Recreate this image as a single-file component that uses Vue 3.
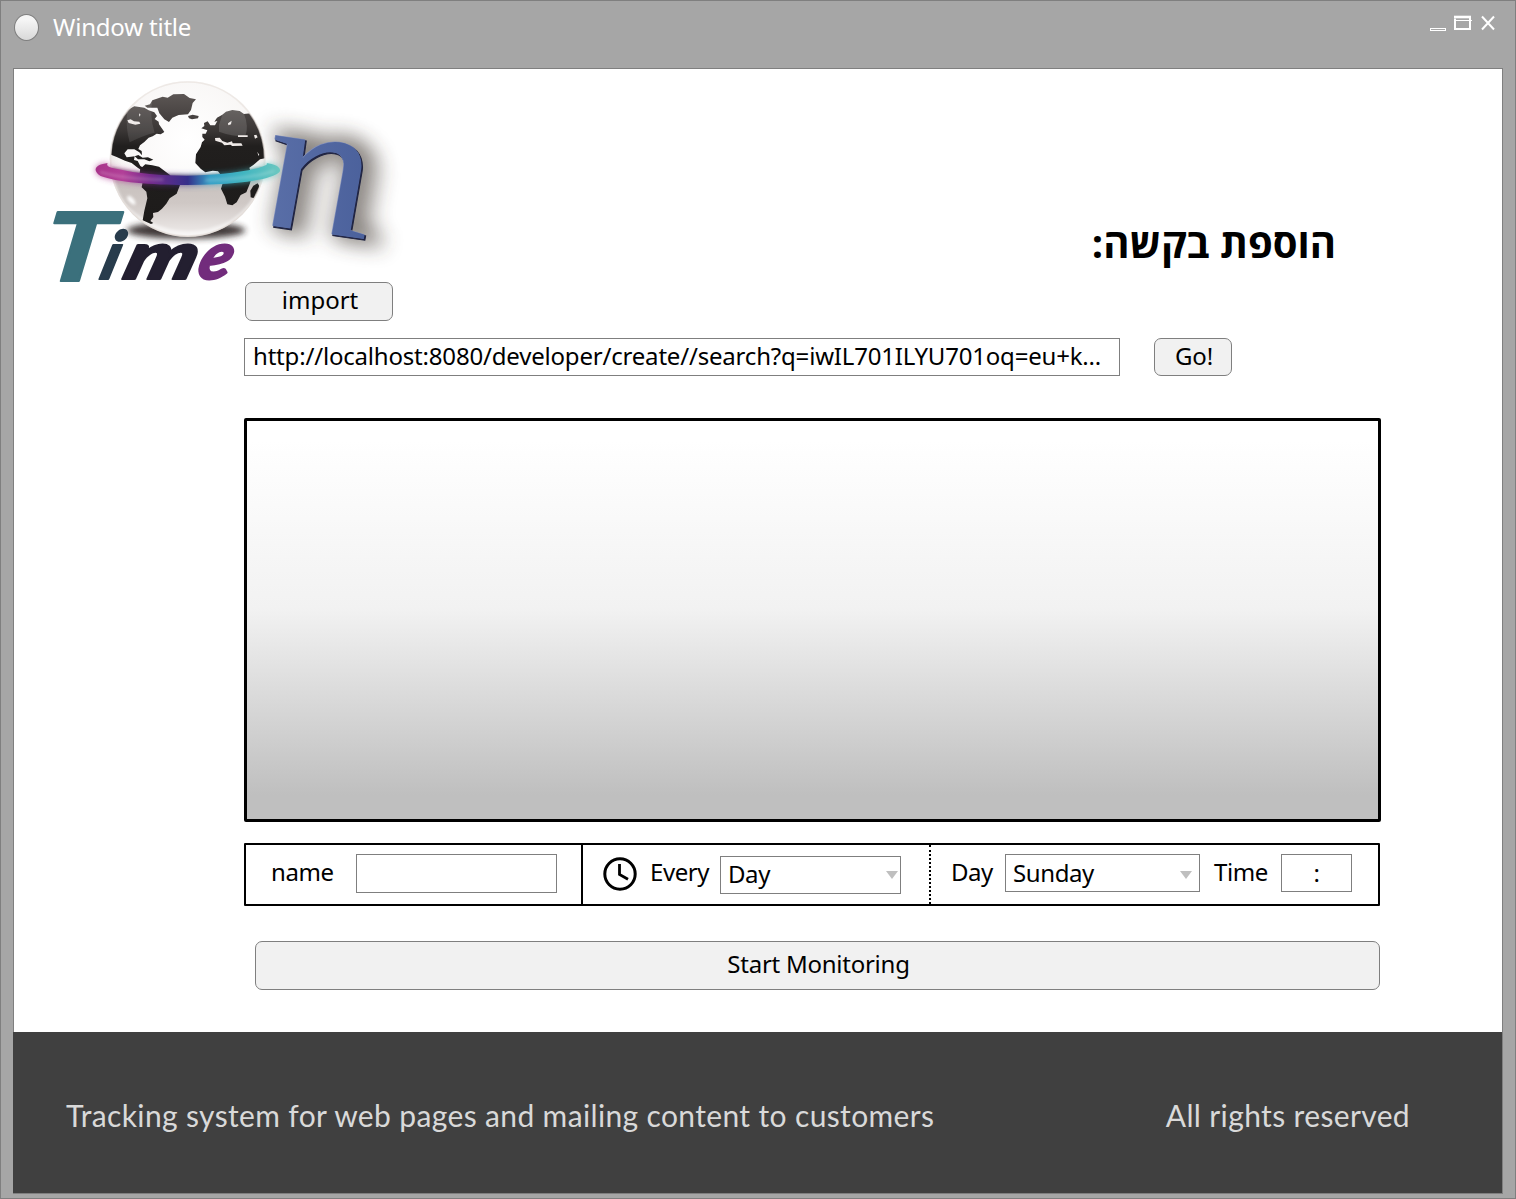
<script setup>
import { ref } from 'vue'

const url = ref('http://localhost:8080/developer/create//search?q=iwIL701ILYU701oq=eu+k...')
</script>

<template>
  <div class="window">
    <header class="titlebar">
      <span class="orb"></span>
      <span class="title">Window title</span>
      <svg class="controls" width="68" height="20" viewBox="0 0 68 20" fill="none" stroke="#fff">
        <rect x="1.5" y="14.5" width="15" height="2" />
        <path d="M26 4.5V15H41V4" stroke-width="2" />
        <path d="M25 3H42" stroke-width="2.6" />
        <path d="M26 6.5H43" />
        <path d="M53 2.5L65 15.5M65 2.5L53 15.5" stroke-width="2" />
      </svg>
    </header>

    <div class="content">
      <main class="page">
        <div class="top">
          <svg class="logo" width="400" height="225" viewBox="14 69 400 225">
            <defs>
              <radialGradient id="ball" cx=".5" cy=".38" r=".64">
                <stop offset="0" stop-color="#fff" />
                <stop offset=".7" stop-color="#f8f6f5" />
                <stop offset="1" stop-color="#d8d0cc" />
              </radialGradient>
              <linearGradient id="lower" x1="0" y1="0" x2="0" y2="1">
                <stop offset="0" stop-color="#c5bebb" />
                <stop offset=".45" stop-color="#cfc8c5" />
                <stop offset="1" stop-color="#f5f2f1" />
              </linearGradient>
              <linearGradient id="land" x1="0" y1="50" x2="0" y2="440" gradientUnits="userSpaceOnUse">
                <stop offset="0" stop-color="#5e5856" />
                <stop offset=".3" stop-color="#3a3635" />
                <stop offset=".42" stop-color="#211f1e" />
                <stop offset="1" stop-color="#1d1b1a" />
              </linearGradient>
              <linearGradient id="ring" x1="15" y1="0" x2="572" y2="0" gradientUnits="userSpaceOnUse">
                <stop offset="0" stop-color="#a8328a" />
                <stop offset=".15" stop-color="#b23f98" />
                <stop offset=".3" stop-color="#742b8c" />
                <stop offset=".5" stop-color="#352f8a" />
                <stop offset=".62" stop-color="#359fc6" />
                <stop offset=".8" stop-color="#41b5c0" />
                <stop offset="1" stop-color="#6cc8c0" />
              </linearGradient>
              <linearGradient id="letter" x1="0" y1="0" x2="1" y2="0">
                <stop offset="0" stop-color="#5a6fa8" />
                <stop offset="1" stop-color="#4a609b" />
              </linearGradient>
              <filter id="soft" x="-50%" y="-50%" width="200%" height="200%"><feGaussianBlur stdDeviation="10" /></filter>
              <filter id="glow" x="-30%" y="-100%" width="160%" height="300%"><feGaussianBlur stdDeviation="9" /></filter>
              <filter id="thin" x="-30%" y="-30%" width="160%" height="160%"><feGaussianBlur stdDeviation="4" /></filter>
              <clipPath id="globe"><circle cx="293" cy="252" r="231" /></clipPath>
            </defs>

            <text class="n halo" transform="translate(273 226) rotate(8) skewX(9) scale(1.12 1)" filter="url(#soft)">n</text>

            <g transform="translate(90 75) scale(.33333)">
              <ellipse cx="288" cy="466" rx="178" ry="25" fill="#2b2422" opacity=".9" filter="url(#glow)" />
              <circle cx="293" cy="252" r="234" fill="url(#ball)" />
              <g clip-path="url(#globe)">
                <path d="M40 290Q293 350 550 290V500H40Z" fill="url(#lower)" />
                <path d="M62 300Q80 405 170 445Q293 510 425 445Q510 390 525 290" fill="none" stroke="#fff" stroke-width="18" opacity=".55" filter="url(#thin)" />
                <g fill="url(#land)">
                  <path d="M164 92L180 88L187 76L218 65L233 68L250 58L282 57L299 69L318 73L308 84L303 105L294 118L266 120L247 128L237 141L223 133L208 115L202 98L172 98Z" />
                  <path d="M294 123L308 119L326 123L324 130L306 133L297 130Z" />
                  <path d="M133 94L163 98L176 106L193 112L201 123L194 132L206 140L207 148L217 162L223 171L212 178L200 176L188 184L176 188L163 201L150 211L145 222L155 228L156 241L148 232L133 223L113 223L103 235L110 247L123 245L134 244L132 255L143 258L151 273L165 281L158 288L143 278L125 264L105 257L80 246L63 239L67 190L87 140L112 105Z" />
                  <path d="M134 244L145 240L158 248L174 247L190 254L178 259L163 253L144 253Z" />
                  <path d="M151 281L166 268L187 271L207 275L225 289L240 300L247 314L270 330L260 356L239 370L229 386L216 401L204 411L189 414L190 426L181 438L190 444L183 447L158 436L163 407L172 370L169 350L155 337L158 321L147 307Z" />
                  <path d="M334 160L343 153L342 144L353 139L361 151L375 151L382 138L373 140L381 128L397 119L408 110L427 105L449 108L462 117L482 115L499 140L516 177L524 210L525 250L510 253L490 270L478 278L486 301L480 325L469 352L452 360L440 382L427 391L412 388L405 365L393 341L399 322L396 304L384 289L368 287L346 292L332 281L316 264L318 238L332 216L336 202L344 194L337 186L337 176L347 176L352 166Z" />
                  <path d="M503 325L508 333L503 354L492 370L482 367L481 347L490 332Z" />
                </g>
                <g fill="#efeae8">
                  <path d="M112 136L122 133L132 139L148 140L151 146L136 149L116 144Z" />
                  <path d="M375 189L389 188L397 198L412 203L426 199L428 205L454 205L458 212L427 213L421 209L403 211L396 203L376 197Z" />
                  <path d="M444 181L473 181V186H444ZM492 181L499 179L503 187L495 191ZM414 145L425 137L423 148L415 151ZM147 115L152 119L148 125ZM502 230L508 240L505 242Z" />
                </g>
                <path d="M111 108Q107 162 119 202Q160 181 194 173Q178 124 187 76Q140 70 111 108Z" fill="#fff" opacity=".1" />
                <path d="M387 149L397 119Q433 88 462 116Q477 154 466 184Q424 184 387 170Z" fill="#fff" opacity=".14" />
                <path d="M65 285Q293 330 523 283" fill="none" stroke="#282320" stroke-width="15" opacity=".45" filter="url(#thin)" />
                <ellipse cx="124" cy="376" rx="7" ry="17" fill="#fff" transform="rotate(-43 124 376)" filter="url(#thin)" />
              </g>
              <circle cx="293" cy="252" r="231" fill="none" stroke="#e6dfdb" stroke-width="5" opacity=".6" />
              <g>
                <path d="M17 286C15 274 31 267 53 264C48 272 55 277 82 282C200 309 390 309 505 279C530 272 535 267 529 264C555 267 575 277 569 290C548 311 470 324 377 328C243 334 91 326 32 303Q19 296 17 286Z" fill="url(#ring)" opacity=".75" filter="url(#glow)" />
                <path d="M17 286C15 274 31 267 53 264C48 272 55 277 82 282C200 309 390 309 505 279C530 272 535 267 529 264C555 267 575 277 569 290C548 311 470 324 377 328C243 334 91 326 32 303Q19 296 17 286Z" fill="url(#ring)" />
                <path d="M30 291Q105 313 220 314M345 316Q480 313 553 287" fill="none" stroke="#fff" stroke-width="8" opacity=".2" filter="url(#thin)" />
              </g>
            </g>

            <g transform="translate(265 225) rotate(8) skewX(9) scale(1.12 1)">
              <text class="n" x="1" y="1" fill="#202442" stroke="#202442" stroke-width="1">n</text>
              <text class="n" x="-.5" y="-.5" fill="#8391be">n</text>
              <text class="n" fill="url(#letter)">n</text>
            </g>
            <g class="time">
              <text font-size="95" fill="#3b707c" stroke="#3b707c" transform="translate(40 281) skewX(-8)" textLength="69" lengthAdjust="spacingAndGlyphs">T</text>
              <text font-size="66" transform="translate(98 279) skewX(-16)"><tspan fill="#283c4c" stroke="#283c4c">i</tspan><tspan x="23" fill="#231f30" stroke="#231f30" textLength="72" lengthAdjust="spacingAndGlyphs">m</tspan><tspan x="97" fill="#722c7c" stroke="#722c7c">e</tspan></text>
            </g>
          </svg>
          <h1 dir="rtl">הוספת בקשה:</h1>
        </div>

        <div class="form">
          <button class="btn import"><span>import</span></button>
          <div class="address">
            <div class="box url"><span>{{ url }}</span></div>
            <button class="btn go"><span>Go!</span></button>
          </div>
          <div class="preview"></div>
          <div class="options">
            <div class="cell name-cell">
              <label>name</label>
              <div class="box name-input"></div>
            </div>
            <div class="cell every-cell">
              <svg class="clock" width="34" height="34" viewBox="0 0 34 34" fill="none" stroke="#000">
                <circle cx="17" cy="17" r="15.2" stroke-width="3" />
                <path d="M16.5 7V17.5L25 22.3" stroke-width="2.8" />
              </svg>
              <label>Every</label>
              <div class="box select every"><span>Day</span><i class="arrow"></i></div>
            </div>
            <div class="cell day-cell">
              <label class="day-label">Day</label>
              <div class="box select day"><span>Sunday</span><i class="arrow"></i></div>
              <label class="time-label">Time</label>
              <div class="box time-input">:</div>
            </div>
          </div>
          <button class="btn start"><span>Start Monitoring</span></button>
        </div>
      </main>

      <footer class="footer">
        <span class="tagline">Tracking system for web pages and mailing content to customers</span>
        <span class="rights">All rights reserved</span>
      </footer>
    </div>
  </div>
</template>

<style>
body { margin: 0; }
</style>

<style scoped>
* { box-sizing: border-box; }
.window {
  width: 1516px;
  height: 1199px;
  padding: 0 12px 4px;
  border: 1px solid #7f7f7f;
  background: #a6a6a6;
  display: flex;
  flex-direction: column;
  overflow: hidden;
  font-family: "Noto Sans", "Open Sans", sans-serif;
  font-size: 24px;
  line-height: 34px;
  letter-spacing: -.19px;
  color: #000;
}
.titlebar {
  flex: none;
  height: 67px;
  display: flex;
  align-items: flex-start;
  padding: 9px 6px 0 1px;
}
.orb {
  width: 25px;
  height: 27px;
  margin-top: 4px;
  border: 1px solid #7f7f7f;
  border-radius: 50%;
  background: linear-gradient(#f5f5f5 20%, #d9d9d9);
}
.title { margin-left: 14px; color: #fff; white-space: nowrap; }
.controls { margin: 4px 0 0 auto; }
.content {
  height: 1126px;
  border: 1px solid #7f7f7f;
  background: #fff;
}
.page { height: 963px; }
.top { height: 213px; display: flex; justify-content: space-between; }
.logo { flex: none; overflow: visible; letter-spacing: 0; }
.n {
  font: italic 196px "Liberation Serif", serif;
}
.halo { fill: #3a302c; opacity: .6; stroke: #3a302c; stroke-width: 14; }
.time { font-family: Lato, sans-serif; font-style: italic; font-weight: 900; stroke-width: 2; stroke-linejoin: round; }
h1 {
  margin: 147px 166px 0 0;
  font: bold 40px/54px "Open Sans", "Noto Sans", "DejaVu Sans", sans-serif;
  letter-spacing: 0;
  white-space: nowrap;
}
.form { width: 1137px; margin-left: 230px; }
.btn {
  display: flex;
  justify-content: center;
  align-items: center;
  padding: 0 0 3px;
  border: 1px solid #7f7f7f;
  border-radius: 7px;
  background: #f1f1f1;
  color: #000;
  font: inherit;
  letter-spacing: inherit;
  white-space: nowrap;
}
.import { width: 148px; height: 39px; margin-left: 1px; padding-left: 2px; letter-spacing: 0; }
.address { display: flex; gap: 34px; margin-top: 17px; }
.box {
  height: 38px;
  border: 1px solid #7f7f7f;
  background: #fff;
  display: flex;
  align-items: center;
  white-space: nowrap;
}
.url { width: 876px; padding: 0 0 2px 8px; }
.go { width: 78px; height: 38px; padding: 0 0 2px 2px; }
.preview {
  height: 404px;
  margin-top: 42px;
  border: 3px solid #000;
  border-radius: 2px;
  background: linear-gradient(#fff 5%, #f2f2f2 47%, #bfbfbf 94%);
}
.options {
  width: 1136px;
  height: 63px;
  margin-top: 21px;
  border: 2px solid #000;
  border-radius: 1px;
  display: flex;
}
.cell { display: flex; align-items: flex-start; padding-top: 9px; }
.cell label { margin-top: 1px; letter-spacing: -.45px; }
.name-cell { width: 337px; border-right: 2px solid #000; padding-left: 25px; }
.name-cell label { width: 85px; }
.name-input { width: 201px; height: 39px; }
.every-cell { width: 348px; padding-left: 20px; position: relative; border-right: 2px dotted #000; }
.clock { margin: 3px 13px 0 0; }
.every-cell label { width: 70px; }
.every { width: 181px; margin-top: 2px; }
.every span { padding-bottom: 2px; }
.select { justify-content: space-between; padding: 0 2px 0 7px; letter-spacing: -.4px; }
.arrow {
  border: solid transparent;
  border-width: 8px 6.5px 0;
  border-top-color: #bfbfbf;
}
.day-cell { padding-left: 20px; }
.day-label { width: 54px; }
.day { width: 195px; padding-right: 7px; }
.day .arrow { margin-top: 3px; }
.cell .time-label { width: 67px; margin-left: 14px; }
.time-input { width: 71px; justify-content: center; }
.start { width: 1125px; height: 49px; margin: 35px 0 0 11px; padding-left: 2px; letter-spacing: -.25px; }
.footer {
  height: 161px;
  margin-left: -1px;
  padding: 63px 92px 0 53px;
  background: #404040;
  color: #d9d9d9;
  display: flex;
  justify-content: space-between;
  font: 30px/40px Lato, sans-serif;
  letter-spacing: .36px;
  white-space: nowrap;
}
</style>
